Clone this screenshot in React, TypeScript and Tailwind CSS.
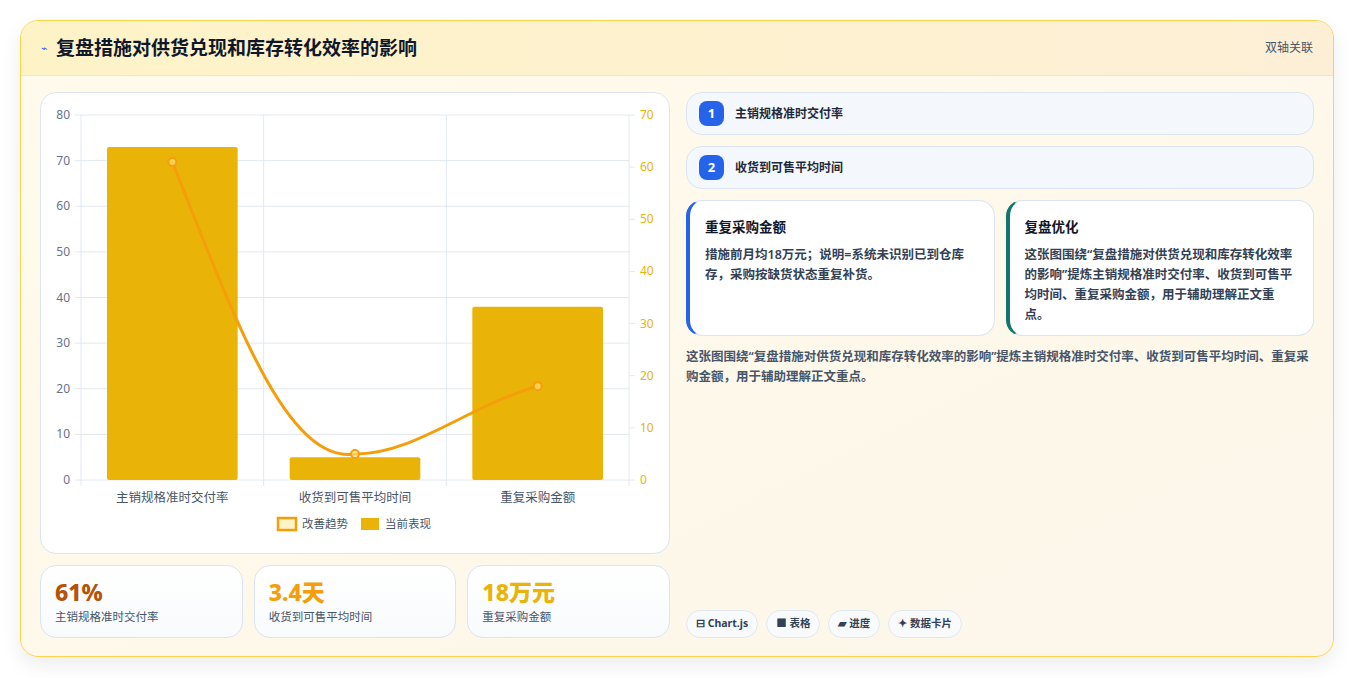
import React from "react";

const font = { fontFamily: '"Noto Sans", "Noto Sans CJK SC", sans-serif' };

const leftTicks = [0, 10, 20, 30, 40, 50, 60, 70, 80];
const rightTicks = [0, 10, 20, 30, 40, 50, 60, 70];
const cats = ["主销规格准时交付率", "收货到可售平均时间", "重复采购金额"];
const bars = [73, 5, 38];

function Chart() {
  const x0 = 40, x1 = 588, top = 22, bot = 387;
  const h = bot - top;
  const cw = (x1 - x0) / 3;
  const yl = (v: number) => bot - (v / 80) * h;
  const yr = (v: number) => bot - (v / 70) * h;
  const p = [61, 5, 18].map((v, i) => [x0 + cw * (i + 0.5), yr(v)]);
  return (
    <svg width="629" height="461" viewBox="0 0 629 461" className="block">
      {leftTicks.map((t) => (
        <g key={t}>
          <line x1={x0 - 6} x2={x1} y1={yl(t)} y2={yl(t)} stroke="#e2e8f0" />
          <text x={x0 - 11} y={yl(t) + 4} textAnchor="end" fontSize="12" fill="#64748b">{t}</text>
        </g>
      ))}
      {rightTicks.map((t) => (
        <g key={t}>
          <line x1={x1} x2={x1 + 6} y1={yr(t)} y2={yr(t)} stroke="#e2e8f0" />
          <text x={x1 + 11} y={yr(t) + 4} fontSize="12" fill="#eab308">{t}</text>
        </g>
      ))}
      {[0, 1, 2, 3].map((i) => (
        <line key={i} x1={x0 + cw * i} x2={x0 + cw * i} y1={top} y2={bot + 6} stroke="#e2e8f0" />
      ))}
      {bars.map((v, i) => (
        <rect key={i} x={x0 + cw * i + 26} y={yl(v)} width={cw - 52} height={bot - yl(v)} rx="2" fill="#eab308" />
      ))}
      <path
        d={`M${p[0][0]},${p[0][1]} C${p[0][0] + 60},${p[0][1] + 150} ${p[1][0] - 70},${p[1][1] + 10} ${p[1][0]},${p[1][1]} C${p[1][0] + 60},${p[1][1]} ${p[2][0] - 70},${p[2][1] + 20} ${p[2][0]},${p[2][1]}`}
        fill="none" stroke="#f59e0b" strokeWidth="3"
      />
      {p.map(([x, y], i) => (
        <circle key={i} cx={x} cy={y} r="4" fill="#fde68a" fillOpacity="0.6" stroke="#f59e0b" strokeWidth="2" />
      ))}
      {cats.map((c, i) => (
        <text key={c} x={x0 + cw * (i + 0.5)} y={bot + 22} textAnchor="middle" fontSize="12.5" fill="#475569">{c}</text>
      ))}
      <rect x="237" y="425" width="18" height="12" fill="#fef3c7" stroke="#f59e0b" strokeWidth="2.5" />
      <text x="261" y="435" fontSize="11.5" fill="#475569">改善趋势</text>
      <rect x="320" y="425" width="18" height="12" fill="#eab308" />
      <text x="344" y="435" fontSize="11.5" fill="#475569">当前表现</text>
    </svg>
  );
}

function Stat({ value, label, color }: { value: string; label: string; color: string }) {
  return (
    <div className="flex-1 rounded-2xl border border-[#dbe4f0] bg-gradient-to-b from-white to-[#f8fafc] px-[14px] pt-[11px] h-[73px]">
      <div className={`text-[23px] font-extrabold leading-[30px] ${color}`}>{value}</div>
      <div className="text-[11.5px] text-[#475569] mt-[1px]">{label}</div>
    </div>
  );
}

export default function App() {
  return (
    <div className="w-[1354px] h-[678px] bg-white pt-[20px] px-[20px]" style={font}>
      <div className="h-[637px] rounded-[18px] border border-[#fcd34d] bg-gradient-to-br from-[#fffbeb] to-[#fdf6ea] shadow-[0_8px_20px_rgba(0,0,0,0.08)] overflow-hidden flex flex-col">
        <div className="h-[56px] flex items-center justify-between px-[20px] bg-gradient-to-r from-[#fef3c7] to-[#fdefd6] border-b border-[#f0e6cf]">
          <div className="flex items-center gap-[8px]">
            <span className="text-[11px] text-[#2563eb]">⌁</span>
            <h1 className="text-[19px] font-bold text-[#0f172a]">复盘措施对供货兑现和库存转化效率的影响</h1>
          </div>
          <span className="text-[12px] text-[#475569]">双轴关联</span>
        </div>
        <div className="flex-1 flex gap-[16px] px-[19px] pt-[16px] pb-[18px]">
          <div className="w-[630px] flex flex-col gap-[11px]">
            <div className="h-[462px] rounded-2xl border border-[#dbe4f0] bg-white overflow-hidden">
              <Chart />
            </div>
            <div className="flex gap-[11px]">
              <Stat value="61%" label="主销规格准时交付率" color="text-[#b45309]" />
              <Stat value="3.4天" label="收货到可售平均时间" color="text-[#f59e0b]" />
              <Stat value="18万元" label="重复采购金额" color="text-[#eab308]" />
            </div>
          </div>
          <div className="flex-1 flex flex-col">
            {["主销规格准时交付率", "收货到可售平均时间"].map((t, i) => (
              <div key={t} className="h-[43px] mb-[11px] rounded-2xl border border-[#dbe4f0] bg-[#f4f8fc] flex items-center px-[12px] gap-[11px]">
                <span className="w-[25px] h-[25px] rounded-lg bg-[#2563eb] text-white text-[13px] font-bold flex items-center justify-center">{i + 1}</span>
                <span className="text-[12px] font-bold text-[#1e293b]">{t}</span>
              </div>
            ))}
            <div className="flex gap-[11px]">
              <div className="flex-1 h-[136px] rounded-2xl border border-[#dbe4f0] border-l-[4px] border-l-[#2563eb] bg-white px-[15px] pt-[16px]">
                <div className="text-[13.5px] font-bold text-[#0f172a]">重复采购金额</div>
                <p className="text-[12.5px] font-semibold leading-[20px] text-[#334155] mt-[8px]">措施前月均18万元；说明=系统未识别已到仓库存，采购按缺货状态重复补货。</p>
              </div>
              <div className="flex-1 h-[136px] rounded-2xl border border-[#dbe4f0] border-l-[4px] border-l-[#0f766e] bg-white px-[15px] pt-[16px]">
                <div className="text-[13.5px] font-bold text-[#0f172a]">复盘优化</div>
                <p className="text-[12.5px] font-semibold leading-[20px] text-[#334155] mt-[8px]">这张图围绕“复盘措施对供货兑现和库存转化效率的影响”提炼主销规格准时交付率、收货到可售平均时间、重复采购金额，用于辅助理解正文重点。</p>
              </div>
            </div>
            <p className="mt-[11px] text-[12.5px] font-semibold leading-[20px] text-[#475569]">这张图围绕“复盘措施对供货兑现和库存转化效率的影响”提炼主销规格准时交付率、收货到可售平均时间、重复采购金额，用于辅助理解正文重点。</p>
            <div className="mt-auto flex gap-[8px]">
              {["⊟ Chart.js", "■ 表格", "▰ 进度", "✦ 数据卡片"].map((c) => (
                <span key={c} className="h-[28px] px-[9px] rounded-full border border-[#e2e8f0] bg-[#f8fafc] text-[10.5px] font-bold text-[#334155] flex items-center">{c}</span>
              ))}
            </div>
          </div>
        </div>
      </div>
    </div>
  );
}
